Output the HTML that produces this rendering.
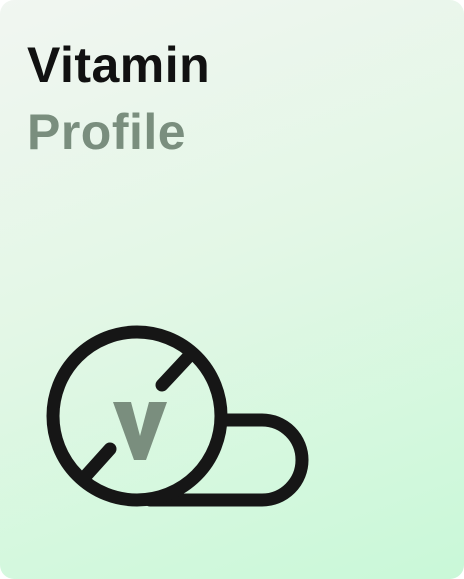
<!DOCTYPE html>
<html><head><style>
html,body{margin:0;padding:0;background:#fff;}
.card{position:relative;width:464px;height:579px;border-radius:14px;overflow:hidden;
background:linear-gradient(160deg,#f1f6f1 0%,#e3f7e6 45%,#c9f8d8 100%);
font-family:"Liberation Sans",sans-serif;font-weight:bold;}
.t{position:absolute;left:27px;font-size:50px;letter-spacing:0.5px;line-height:1;}
</style></head><body>
<div class="card">
<div class="t" style="top:40px;color:#111;">Vitamin</div>
<div class="t" style="top:107px;color:#7a8e7e;">Profile</div>
<svg width="464" height="579" style="position:absolute;left:0;top:0">
<path d="M222 420 H262 A40 40 0 0 1 262 500 H150" fill="none" stroke="#161616" stroke-width="13" stroke-linecap="round"/>
<circle cx="137" cy="416" r="84" fill="none" stroke="#161616" stroke-width="13"/>
<line x1="162" y1="385" x2="190" y2="355" stroke="#161616" stroke-width="13" stroke-linecap="round"/>
<line x1="110" y1="449" x2="83" y2="479" stroke="#161616" stroke-width="13" stroke-linecap="round"/>
<path d="M113 402 H131 L140 436 L149 402 H167 L146 460 H134 Z" fill="#7a8e7e"/>
</svg>
</div>
</body></html>
